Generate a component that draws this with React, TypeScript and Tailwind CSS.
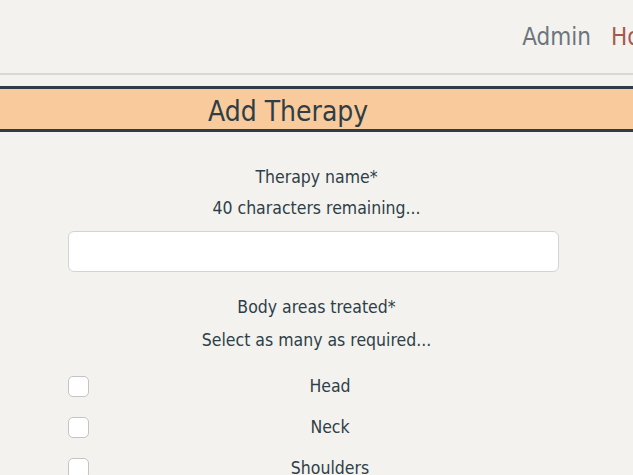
import React from "react";

const font = { fontFamily: '"DejaVu Sans Condensed", "DejaVu Sans", sans-serif' };

function Row({ label }: { label: string }) {
  return (
    <div className="flex items-center h-[41px]">
      <div className="w-[21px] h-[21px] rounded-[5px] border border-[#c4c4c4] bg-white shrink-0" />
      <div className="flex-1 text-center text-[17.5px] text-[#2d4048] pl-[8px]">{label}</div>
    </div>
  );
}

export default function App() {
  return (
    <div className="w-[633px] h-[475px] overflow-hidden bg-[#f4f2ee]" style={font}>
      <header className="h-[75px] border-b-[2px] border-[#d6dad4] flex items-center justify-end gap-[20px] overflow-hidden whitespace-nowrap">
        <span className="text-[24px] text-[#6c757d] font-light">Admin</span>
        <span className="text-[24px] text-[#a55a4e] font-light w-[22px] overflow-hidden">Home</span>
      </header>
      <div className="mt-[11px] h-[46px] bg-[#f9cb9c] border-y-[3px] border-[#2f3e46] flex items-center">
        <h1 className="ml-[208px] text-[28px] text-[#2f3e46] leading-none pt-[6px]">Add Therapy</h1>
      </div>
      <div className="px-[68px] pt-[30px] text-[#2d4048]">
        <div className="text-center text-[17.5px] leading-[31px]">Therapy name*</div>
        <div className="text-center text-[17.5px] leading-[31px]">40 characters remaining...</div>
        <div className="mt-[7px] mr-[6px] h-[41px] rounded-[6px] border border-[#ced4da] bg-white" />
        <div className="mt-[20px] text-center text-[17.5px] leading-[31px]">Body areas treated*</div>
        <div className="text-center text-[17.5px] leading-[31px] mt-[2px]">Select as many as required...</div>
        <div className="mt-[10px] pr-[2px]">
          <Row label="Head" />
          <Row label="Neck" />
          <Row label="Shoulders" />
        </div>
      </div>
    </div>
  );
}
